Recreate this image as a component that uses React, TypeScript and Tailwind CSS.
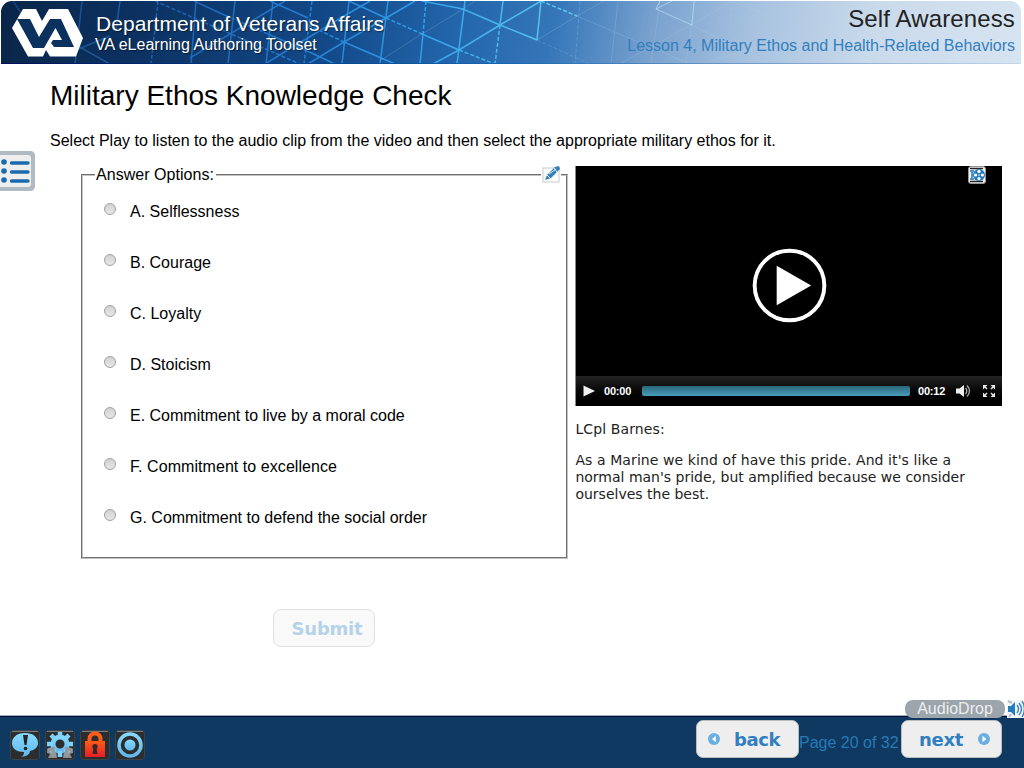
import type { ReactNode } from "react";

const sans = "font-['Liberation_Sans',Arial,sans-serif]";
const verdana = "font-['DejaVu_Sans',Verdana,sans-serif]";

const options = [
  "A. Selflessness",
  "B. Courage",
  "C. Loyalty",
  "D. Stoicism",
  "E. Commitment to live by a moral code",
  "F. Commitment to excellence",
  "G. Commitment to defend the social order",
];

function HeaderArt() {
  return (
    <svg className="absolute inset-0" width="1020" height="63" viewBox="1 1 1020 63" fill="none">
      <defs>
        <linearGradient id="wire" gradientUnits="userSpaceOnUse" x1="0" y1="0" x2="560" y2="0">
          <stop offset="0" stopColor="#1a599e" stopOpacity=".6" />
          <stop offset=".5" stopColor="#2377cb" />
          <stop offset=".75" stopColor="#2fa0e8" />
          <stop offset="1" stopColor="#5cc9f0" />
        </linearGradient>
      </defs>
      <g stroke="url(#wire)" strokeWidth="1.5">
        <path d="M82 1L75 64M28 23L13 1M76 45L110 64M120 1L116 30M196 1L191 64M235 1L228 64M273 1L266 64M349 1L342 64M388 1L380 64M423 34L420 64M465 1L457 64M503 1L500 25M541 1L537 40" />
        <path d="M76 50L110 36M190 58L285 1M265 64L344 16L370 1M308 64L344 42L386 18L415 1M433 64L459 50L500 25L541 1" />
        <path d="M194 1L231 18M268 34L305 50L335 64M270 1L308 18M349 1L386 18M422 34L459 50M422 1L463 9L500 25L537 40M344 42L395 64" />
        <path strokeDasharray="4 2" d="M158 1L151 64M312 1L304 64M426 1L423 34M500 25L495 64M155 1L194 18L231 34L268 50L300 64M231 18L268 34M308 25L344 42M386 18L422 34M459 50L500 66M541 1L577 16" />
      </g>
      <g stroke="#b7d5ed" strokeOpacity=".22">
        <path d="M381 60L422 34L463 9L475 1M537 40L577 16L604 1M577 16L617 33L657 50L690 64M618 1L611 64M660 1L651 64M695 1L686 64M812 1L805 64M620 64L691 25L732 1M700 64L809 32L860 1M692 25L770 64M731 1L809 32L881 64" />
        <path strokeDasharray="4 2" d="M580 1L575 64M537 40L590 64M732 1L725 64" />
      </g>
      <path d="M660 1L656 9L692 25L694 1M656 9L672 1" stroke="#b9e4f4" strokeOpacity=".65" />
    </svg>
  );
}

function VALogo() {
  return (
    <svg width="72" height="50" viewBox="11 8 72 50">
      <path fill="#fff" d="M23 9H36L42 21L49 9H68L83 38L76 56.5H50L46 50L43 56.5H28L12 28Z" />
      <path fill="#0b315f" d="M17 19H30L39 37L50 19H61L74 47H54L51 43L53 40H62L55.5 28L44 48H33Z" />
    </svg>
  );
}

function FootIcon({ children }: { children: ReactNode }) {
  return (
    <svg width="30" height="30" viewBox="0 0 30 30">
      <defs>
        <linearGradient id="ice" x1="0" y1="0" x2="0" y2="1"><stop stopColor="#86daff" /><stop offset="1" stopColor="#61b8e8" /></linearGradient>
        <linearGradient id="fire" x1="0" y1="0" x2="0" y2="1"><stop stopColor="#ff5b19" /><stop offset="1" stopColor="#e51d26" /></linearGradient>
      </defs>
      <rect x=".5" y=".5" width="29" height="29" rx="3" fill="#2c2d2f" stroke="#3b4248" />
      <path d="M2 1.5H28" stroke="#777c80" />
      {children}
    </svg>
  );
}

function AnswerOption({ label }: { label: string }) {
  return (
    <label className="flex h-[51px] items-start">
      <span className="mt-[5px] h-3 w-3 shrink-0 rounded-full border border-[#a0a0a0] bg-linear-to-b from-[#d2d2d2] to-[#e7e7e7]" />
      <span className={`ml-[14px] whitespace-nowrap leading-7 ${label.startsWith("F") ? "tracking-[0.06px]" : ""}`}>{label}</span>
    </label>
  );
}

export default function App() {
  return (
    <div className={`${sans} flex h-[768px] w-[1024px] flex-col overflow-hidden bg-white text-[16px] text-black`}>
      <header className="relative ml-px mt-px flex h-[63px] w-[1020px] shrink-0 justify-between overflow-hidden rounded-t-[11px] bg-[linear-gradient(100deg,#0a2548_0%,#0c3364_15%,#134a8a_33%,#2264aa_44%,#3576b9_54%,#7ba3cf_64%,#a6c1df_73%,#c9daeb_85%,#d7e4f1_100%)]">
        <HeaderArt />
        <div className="absolute inset-x-0 bottom-0 h-px bg-linear-to-r from-[#000c5b] via-[#1768b0] to-[#c5d6e6]" />
        <div className="relative flex pl-[10px] pt-[7px] text-white">
          <VALogo />
          <div className="ml-[13px] pt-[4px] [text-shadow:1px_1px_1px_#0008]">
            <div className="whitespace-nowrap text-[21px] leading-[24px] tracking-[0.08px]">Department of Veterans Affairs</div>
            <div className="-ml-px whitespace-nowrap text-[16px] leading-[18px]">VA eLearning Authoring Toolset</div>
          </div>
        </div>
        <div className="relative pr-[6px] pt-[4px] text-right">
          <div className="text-[24px] leading-7 tracking-[0.13px] text-[#222]">Self Awareness</div>
          <div className="text-[16px] leading-[25px] text-[#327fbe]">Lesson 4, Military Ethos and Health-Related Behaviors</div>
        </div>
      </header>

      <main className="flex h-[651px] shrink-0 flex-col">
        <div className="h-[102px] pl-[50px] pt-[16px]">
          <h1 className="text-[28px] leading-8">Military Ethos Knowledge Check</h1>
          <p className="mt-[19px] text-[16px] leading-5">Select Play to listen to the audio clip from the video and then select the appropriate military ethos for it.</p>
        </div>
        <div className="flex h-[400px]">
          <aside className="w-[81px] shrink-0">
            <svg className="-mt-[15px]" width="35" height="40" viewBox="0 0 35 40">
              <path d="M0 0H30Q35 0 35 5V35Q35 40 30 40H0Z" fill="#afbac2" />
              <path d="M0 4H28Q31 4 31 7V33Q31 36 28 36H0Z" fill="#eee" />
              <g fill="#1b69ae"><circle cx="4" cy="11" r="2.8" /><circle cx="4" cy="20" r="2.8" /><circle cx="4" cy="29" r="2.8" /></g>
              <path d="M11.5 12H28M11.5 21H28M11.5 30H28" stroke="#1b69ae" strokeWidth="3.4" strokeLinecap="round" />
            </svg>
          </aside>
          <div className="relative w-[486.5px] shrink-0">
            <fieldset className="h-[393px] border-2 border-[#c4c4c4] pl-[21px] [border-style:groove]">
              <legend className="-ml-[9px] pl-px pr-[2px] leading-[18px] tracking-[0.04px]">Answer Options:</legend>
              <div className="pt-[14px]">
                {options.map((option) => <AnswerOption key={option} label={option} />)}
              </div>
            </fieldset>
            <svg className="absolute right-[6.5px] top-[-1px] bg-white" width="20" height="19" viewBox="0 0 20 19">
              <path d="M2 3H18V17H2Z" fill="#fff" stroke="#dcdcdc" strokeWidth="1.5" />
              <path d="M4 15L6 10L14 2L18 1L19 4L10 13Z" fill="#3180bb" />
              <path d="M6 10L9 13M13 3L16 7M8 9L15 4" stroke="#e5eff8" />
            </svg>
          </div>
          <section className="ml-[7.5px] w-[427px]">
            <div className="relative flex h-[240px] flex-col border-l border-[#888] bg-black">
              <div className="flex flex-1 items-center justify-center pt-[28px]">
                <svg width="75" height="75" viewBox="0 0 76 76"><circle cx="38" cy="38" r="35.3" fill="none" stroke="#fff" strokeWidth="4" /><path d="M25 18V58L60 38Z" fill="#fff" /></svg>
              </div>
              <svg className="absolute right-[16px] top-0" width="18" height="18" viewBox="0 0 18 18">
                <rect x=".5" y=".5" width="17" height="17" rx="2.5" fill="#f5f5f5" stroke="#999" />
                <path d="M2 2.5H15M2 15.5H15" stroke="#222" strokeWidth="1.5" />
                <path d="M2 4H6V6H5V12H6V14H2V12H3V6H2Z" fill="#4f95cb" />
                <circle cx="11" cy="9" r="6" fill="#267bbd" />
                <g fill="#fff"><circle cx="11" cy="5.4" r="1.6" /><circle cx="11" cy="12.6" r="1.6" /><circle cx="7.6" cy="9" r="1.6" /><circle cx="14.4" cy="9" r="1.6" /><circle cx="11" cy="9" r=".8" /></g>
              </svg>
              <div className="flex h-[30px] items-center bg-linear-to-b from-[#242424] to-black text-[11px] font-bold text-white">
                <svg className="ml-[7px]" width="12" height="12" viewBox="0 0 12 12"><path d="M.5 .5V11.5L12 6Z" fill="#eee" /></svg>
                <span className="ml-[9px] w-[30px] tracking-[-0.2px]">00:00</span>
                <div className="ml-[8px] h-[10px] w-[268px] rounded-[2px] bg-linear-to-b from-[#29677a] to-[#499dba]" />
                <span className="ml-[8px] w-[30px] tracking-[-0.2px]">00:12</span>
                <svg className="ml-[8px]" width="15" height="14" viewBox="0 0 15 14"><path d="M0 4.5H3.5L8 1V13L3.5 9.5H0Z" fill="#eee" /><path d="M9.5 4Q12 7 9.5 10M11 1.5Q16 7 11 12.5" fill="none" stroke="#aaa" strokeWidth="1.3" /></svg>
                <svg className="ml-[12px]" width="12" height="12" viewBox="0 0 12 12"><path d="M0 0H4.5L0 4.5ZM12 0V4.5L7.5 0ZM0 12V7.5L4.5 12ZM12 12H7.5L12 7.5Z" fill="#eee" /><path d="M1 1L4 4M11 1L8 4M1 11L4 8M11 11L8 8" stroke="#ddd" strokeWidth="1.6" /></svg>
              </div>
            </div>
            <div className={`${verdana} pl-[0.4px] pt-[15px] text-[14px] leading-[17px] text-[#222]`}>
              <p className="tracking-[0.12px]">LCpl Barnes:</p>
              <p className="mt-[14px] whitespace-nowrap"><span className="tracking-[0.09px]">As a Marine we kind of have this pride. And it's like a</span><br />normal man's pride, but amplified because we consider<br />ourselves the best.</p>
            </div>
          </section>
        </div>
        <button disabled className={`${verdana} ml-[273px] mt-[43px] h-[38px] w-[102px] shrink-0 rounded-[8px] border border-[#e2e2e2] bg-[#f9f9f9] pl-[6px] text-[18px] font-bold tracking-[-0.2px] text-[#b4d3ea]`}>Submit</button>
      </main>

      <footer className="relative flex h-[53px] shrink-0 items-start justify-between border-t border-[#a3adb8] bg-[#0f3960] shadow-[inset_0_1px_0_#000c3b]">
        <div className="flex gap-[5px] pl-[10px] pt-[14px]">
          <FootIcon>
            <path d="M15 3C6 3 2 8 2 13C2 19 7 22 14 22Q14 26 11 27Q20 26 20 21C25 20 28 17 28 13C28 7 23 3 15 3Z" fill="url(#ice)" />
            <path d="M13 5H18L16.5 15H14.5Z" fill="#222" /><circle cx="15.5" cy="18.5" r="1.8" fill="#222" />
          </FootIcon>
          <FootIcon>
            <path d="M2 19L7 17L11 20L12 28H3L5 24L2 23ZM28 19L23 17L19 20L18 28H27L25 24L28 23Z" fill="#8b8e91" />
            <circle cx="15" cy="14" r="7" fill="none" stroke="url(#ice)" strokeWidth="5" />
            <path d="M15 2V7M15 21V27M2 14H8M22 14H28M6 5L10 9M24 5L20 9M6 23L10 19M24 23L20 19" stroke="#7ed3fa" strokeWidth="4.5" />
            <path d="M3 20L8 19L9 27M27 20L22 19L21 27" fill="none" stroke="#96999b" strokeWidth="3.5" />
          </FootIcon>
          <FootIcon>
            <path d="M9.5 13V9C9.5 1.5 20.5 1.5 20.5 9V13" fill="none" stroke="#ff5b19" strokeWidth="4" />
            <path d="M5 11H25V27H5Z" fill="url(#fire)" /><circle cx="15" cy="16.5" r="2.6" fill="#33272a" /><path d="M13.7 17H16.3L17.5 24H12.5Z" fill="#33272a" />
          </FootIcon>
          <FootIcon><circle cx="15" cy="15" r="11" fill="none" stroke="url(#ice)" strokeWidth="3.5" /><circle cx="15" cy="15" r="5.5" fill="url(#ice)" /></FootIcon>
        </div>
        <div className="flex pr-[22px] pt-[4px]">
          <button className={`${verdana} flex h-[38px] w-[103px] items-center rounded-[7px] border border-[#b9bdc0] bg-[#eee] pl-[11px] text-[18px] font-bold tracking-[-0.4px] text-[#317fbe]`}>
            <svg width="12" height="12"><circle cx="6" cy="6" r="6" fill="#6baee0" /><path d="M7.8 2.8V9.2L4 6Z" fill="#fff" /></svg>
            <span className="ml-[14px]">back</span>
          </button>
          <div className="w-[102px] whitespace-nowrap pt-[13px] text-[16px] leading-[19px] text-[#2879b8]">Page 20 of 32</div>
          <button className={`${verdana} flex h-[38px] w-[101px] items-center justify-between rounded-[7px] border border-[#b9bdc0] bg-[#eee] pl-[17px] pr-[11px] text-[18px] font-bold tracking-[-0.3px] text-[#317fbe]`}>
            <span>next</span>
            <svg width="12" height="12"><circle cx="6" cy="6" r="6" fill="#6baee0" /><path d="M4.5 2.8V9.2L8.3 6Z" fill="#fff" /></svg>
          </button>
        </div>
        <div className="absolute -top-[16px] right-[19px] h-[18px] w-[100px] rounded-[8px] bg-[#9ba5ab] text-center text-[16px] leading-[18px] text-[#eee]">AudioDrop</div>
        <svg className="absolute -top-[16px] right-0" width="17" height="18" viewBox="0 0 17 18">
          <path d="M0 0H17V18H0Z" fill="#f3f5f7" /><path d="M1 1L5 3M2 17L4 14" stroke="#b6bdc3" strokeWidth="2" /><path d="M1 6H4L8 2V16L4 12H1Z" fill="#247ebe" /><path d="M10 5Q13 9 10 13M12 3Q17 9 12 15M15 1Q20 9 15 17" fill="none" stroke="#3a83b8" strokeWidth="1.4" />
        </svg>
      </footer>
    </div>
  );
}
